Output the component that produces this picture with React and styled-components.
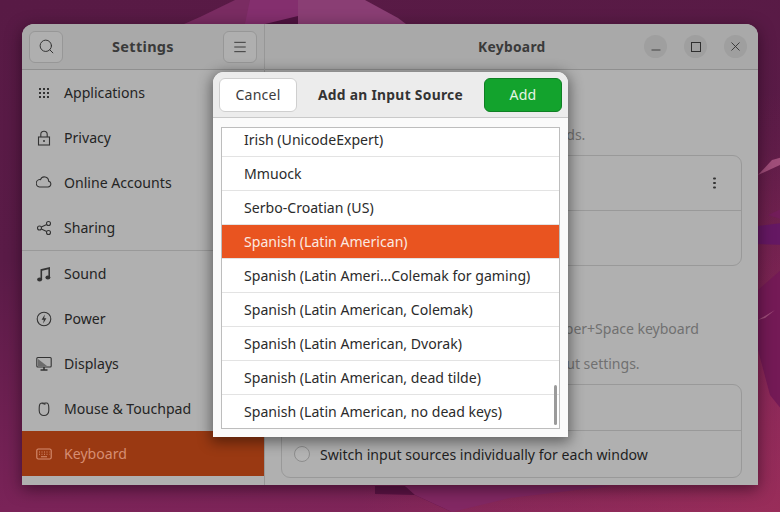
import React from 'react';
import styled, { createGlobalStyle } from 'styled-components';
import { Search, Menu, Minus, X } from 'lucide-react';

const GlobalStyle = createGlobalStyle`
  html, body {
    margin: 0;
    padding: 0;
    height: 100%;
  }
  body {
    font-family: "Noto Sans", "Open Sans", sans-serif;
  }
`;

const Desktop = styled.div`
  position: relative;
  width: 780px;
  height: 512px;
  overflow: hidden;
  background:
    radial-gradient(circle at 100% 100%, rgba(170, 50, 90, 0.55), rgba(170, 50, 90, 0) 45%),
    linear-gradient(172deg, #581a45 0%, #5a1b47 42%, #7a2358 82%, #842759 100%);
`;

const Wallpaper = styled.svg`
  position: absolute;
  inset: 0;
`;

const Win = styled.div`
  position: absolute;
  left: 22px;
  top: 24px;
  width: 736px;
  height: 461px;
  display: flex;
  overflow: hidden;
  background: #b0b0b0;
  border-radius: 12px 12px 0 0;
  box-shadow: 0 4px 16px rgba(20, 0, 15, 0.55);
`;

const Sidebar = styled.aside`
  width: 242px;
  flex-shrink: 0;
  border-right: 1px solid #979797;
`;

const Main = styled.main`
  flex: 1;
  min-width: 0;
`;

const Header = styled.header`
  height: 45px;
  display: flex;
  align-items: center;
  justify-content: space-between;
  background: #a9a9a9;
  border-bottom: 1px solid #8f8f8f;
  padding: ${p => p.$main ? '0 11px 0 10px' : '0 7px'};
`;

const Title = styled.h1`
  margin: 0;
  padding-bottom: 1px;
  font-size: 14.5px;
  font-weight: 700;
  letter-spacing: 0.3px;
  color: #3a3a3a;
`;

const MainTitle = styled(Title)`
  margin-left: 203px;
  font-size: 13.8px;
`;

const HeadButton = styled.div`
  width: 34px;
  height: 32px;
  box-sizing: border-box;
  display: flex;
  align-items: center;
  justify-content: center;
  color: #333;
  background: #afafaf;
  border: 1px solid #979797;
  border-radius: 6px;
`;

const WinControls = styled.div`
  display: flex;
  gap: 17px;
`;

const WinButton = styled.div`
  width: 23px;
  height: 23px;
  border-radius: 50%;
  display: flex;
  align-items: center;
  justify-content: center;
  color: #2f2f2f;
  background: #9f9f9f;
`;

const MaxBox = styled.span`
  width: 8px;
  height: 8px;
  border: 1.2px solid #2f2f2f;
`;

const NavGroup = styled.nav`
  border-bottom: ${p => p.$divided ? '1px solid #999' : 'none'};
`;

const NavRow = styled.div`
  height: 45px;
  box-sizing: border-box;
  display: flex;
  align-items: center;
  gap: 12px;
  padding: 0 0 0 14px;
  font-size: 14.1px;
  color: ${p => p.$active ? '#d68e72' : '#242424'};
  background: ${p => p.$active ? '#9a3912' : 'transparent'};
`;

const NavLabel = styled.span`
  padding-bottom: 1px;
`;

const NavIcon = styled.svg`
  width: 16px;
  height: 16px;
  flex-shrink: 0;
  fill: none;
  stroke: ${p => p.$active ? '#d68e72' : '#333'};
  stroke-width: 1.1;
`;

const Content = styled.div`
  padding: 0 16px;
`;

const SectionTitle = styled.h2`
  margin: ${p => p.$first ? '31px' : '0'} 0 0;
  height: 24px;
  font-size: 14.1px;
  font-weight: 700;
  color: #333;
`;

const Note = styled.p`
  margin: 0;
  height: 35px;
  line-height: 33px;
  font-size: 14.1px;
  letter-spacing: -0.05px;
  white-space: nowrap;
  color: #717171;
`;

const FirstNote = styled(Note)`
  height: 20px;
  line-height: 20px;
  margin-bottom: 10px;
`;

const Card = styled.div`
  box-sizing: border-box;
  border: 1px solid #999;
  border-radius: 9px;
`;

const KeyCard = styled(Card)`
  height: 111px;
  margin-bottom: 22px;
`;

const SwitchCard = styled(Card)`
  margin-top: 2px;
`;

const KeyRow = styled.div`
  height: 55px;
  box-sizing: border-box;
  display: flex;
  align-items: center;
  justify-content: flex-end;
  padding-right: 25px;
  border-bottom: ${p => p.$last ? 'none' : '1px solid #999'};
`;

const Kebab = styled.span`
  width: 2.6px;
  height: 2.6px;
  border-radius: 50%;
  background: #333;
  box-shadow: 0 -4.5px 0 #333, 0 4.5px 0 #333;
`;

const RadioRow = styled.div`
  height: 46px;
  box-sizing: border-box;
  display: flex;
  align-items: center;
  gap: 10px;
  padding-left: 12px;
  font-size: 14.1px;
  color: #1f1f1f;
  border-bottom: ${p => p.$last ? 'none' : '1px solid #999'};
`;

const Radio = styled.span`
  width: 16px;
  height: 16px;
  box-sizing: border-box;
  border: 1px solid #8d8d8d;
  border-radius: 50%;
  background: #b4b4b4;
`;

const Dialog = styled.div`
  position: absolute;
  left: 191px;
  top: 48px;
  width: 355px;
  height: 365px;
  background: #fafafa;
  border-radius: 11px 11px 0 0;
  box-shadow: 0 3px 14px 2px rgba(0, 0, 0, 0.45);
  overflow: hidden;
`;

const DialogHeader = styled.div`
  height: 46px;
  box-sizing: border-box;
  display: flex;
  align-items: center;
  justify-content: space-between;
  padding: 0 6px;
  background: #ececec;
  border-bottom: 1px solid #c9c9c9;
`;

const DialogButton = styled.div`
  width: 78px;
  height: 34px;
  box-sizing: border-box;
  display: flex;
  align-items: center;
  justify-content: center;
  padding-bottom: 1px;
  font-size: 14.1px;
  letter-spacing: 0.2px;
  border-radius: 6px;
  color: ${p => p.$primary ? '#e6f5e6' : '#3d3d3d'};
  background: ${p => p.$primary ? '#13a32d' : '#fff'};
  border: 1px solid ${p => p.$primary ? '#0f7f24' : '#cfcfcf'};
`;

const DialogTitle = styled(Title)`
  font-size: 13.8px;
  color: #333;
`;

const SourceList = styled.div`
  position: relative;
  height: 302px;
  box-sizing: border-box;
  margin: 9px 8px 0;
  overflow: hidden;
  background: #fff;
  border: 1px solid #bdbdbd;
`;

const SourceRow = styled.div`
  height: 34px;
  box-sizing: border-box;
  display: flex;
  align-items: center;
  padding: 0 0 1px 22px;
  font-size: 14.1px;
  white-space: nowrap;
  color: ${p => p.$selected ? '#fbe9e2' : '#2b2b2b'};
  background: ${p => p.$selected ? '#e95420' : '#fff'};
  border-bottom: 1px solid #e3e3e3;
  &:first-child {
    margin-top: -5px;
  }
  &:last-of-type {
    border-bottom: none;
  }
`;

const ScrollThumb = styled.div`
  position: absolute;
  right: 2px;
  top: 257px;
  width: 3px;
  height: 40px;
  border-radius: 2px;
  background: #9b9b9b;
`;

const topNav = [
  {
    label: 'Applications',
    icon: (
      <g fill="#333" stroke="none">
        {[3, 7, 11].map(y => [3, 7, 11].map(x => <rect key={`${x}-${y}`} x={x} y={y} width="2" height="2" />))}
      </g>
    ),
  },
  {
    label: 'Privacy',
    icon: (
      <>
        <rect x="2.5" y="7" width="11" height="8" />
        <path d="M4.8 7V4.5a3.2 3.2 0 0 1 6.4 0V7" />
        <circle cx="8" cy="11" r="1" fill="#333" stroke="none" />
      </>
    ),
  },
  {
    label: 'Online Accounts',
    icon: <path d="M4 12.5h8.5a3 3 0 0 0 .6-5.9A4.2 4.2 0 0 0 5 5.1 3.7 3.7 0 0 0 4 12.5z" transform="translate(-0.5 -0.5)" />,
  },
  {
    label: 'Sharing',
    icon: (
      <>
        <circle cx="3.5" cy="8" r="2" />
        <circle cx="12.5" cy="3.5" r="2" />
        <circle cx="12.5" cy="12.5" r="2" />
        <path d="M5.3 7.1l5.4-2.7M5.3 8.9l5.4 2.7" />
      </>
    ),
  },
];

const bottomNav = [
  {
    label: 'Sound',
    icon: (
      <g fill="#333" stroke="none">
        <path d="M4.5 3.2L14 1v10.5h-1.6V3.2L6.1 4.7v9h-1.6z" />
        <ellipse cx="3.6" cy="13.4" rx="2.5" ry="2" />
        <ellipse cx="11.9" cy="11.4" rx="2.5" ry="2" />
      </g>
    ),
  },
  {
    label: 'Power',
    icon: (
      <>
        <circle cx="8" cy="8" r="6.8" />
        <path d="M8.8 3.6L5.6 8.8h2.2l-.6 3.6 3.2-5.2H8.2z" fill="#333" stroke="none" />
      </>
    ),
  },
  {
    label: 'Displays',
    icon: (
      <>
        <rect x="0.8" y="1.5" width="14.4" height="9.5" rx="1" />
        <path d="M2 3l9 7H2z" fill="#333" stroke="none" opacity="0.55" />
        <path d="M8 11v2.5M4.5 14h7" strokeWidth="1.6" />
      </>
    ),
  },
  {
    label: 'Mouse & Touchpad',
    icon: <path d="M5.5 2h1.7v1.2M8.8 3.2V2h1.7c1.5 0 2.3 1.6 2.3 5v2.5c0 3-1.9 5-4.8 5s-4.8-2-4.8-5V7c0-3.4.8-5 2.6-5z" />,
  },
];

const sources = [
  'Irish (UnicodeExpert)',
  'Mmuock',
  'Serbo-Croatian (US)',
  'Spanish (Latin American)',
  'Spanish (Latin Ameri…Colemak for gaming)',
  'Spanish (Latin American, Colemak)',
  'Spanish (Latin American, Dvorak)',
  'Spanish (Latin American, dead tilde)',
  'Spanish (Latin American, no dead keys)',
];

const Item = ({ item }) => (
  <NavRow>
    <NavIcon viewBox="0 0 16 16">{item.icon}</NavIcon>
    <NavLabel>{item.label}</NavLabel>
  </NavRow>
);

const App = () => (
  <>
    <GlobalStyle />
    <Desktop>
      <Wallpaper width="780" height="512" viewBox="0 0 780 512">
        <polygon points="184,24 200,17 235,0 300,0 298,24" fill="#7a2c62" />
        <polygon points="245,24 250,0 300,0 298,24" fill="#842f6e" />
        <polygon points="298,0 365,0 398,18 406,24 298,24" fill="#8a3e74" />
        <polygon points="265,24 298,24 298,16" fill="#4f1340" />
        <polygon points="758,175 772,160 790,155 780,165" fill="#a04e7a" />
        <polygon points="758,226 790,222 790,245 758,244" fill="#651863" />
        <polygon points="768,215 790,205 790,222" fill="#721d59" />
        <polygon points="758,290 790,262 790,420 770,395 758,350" fill="#741a56" />
        <polygon points="758,320 775,310 765,318" fill="#a04e7a" />
        <polygon points="375,486 405,486 452,512 415,495 375,494" fill="#5a1444" />
        <polygon points="405,486 610,486 510,498 452,512 415,495" fill="#822863" />
      </Wallpaper>
      <Win>
        <Sidebar>
          <Header>
            <HeadButton><Search size={17} strokeWidth={1.4} /></HeadButton>
            <Title>Settings</Title>
            <HeadButton><Menu size={16} strokeWidth={1.4} /></HeadButton>
          </Header>
          <NavGroup $divided>
            {topNav.map(item => <Item key={item.label} item={item} />)}
          </NavGroup>
          <NavGroup>
            {bottomNav.map(item => <Item key={item.label} item={item} />)}
            <NavRow $active>
              <NavIcon $active viewBox="0 0 16 16">
                <rect x="0.8" y="3" width="14.4" height="10" rx="1.5" />
                <path d="M3 6h1M5.5 6h1M8 6h1M10.5 6h1M13 6h.5M3 8.2h1M5.5 8.2h1M8 8.2h1M10.5 8.2h1M13 8.2h.5M5 10.7h6" />
              </NavIcon>
              <NavLabel>Keyboard</NavLabel>
            </NavRow>
          </NavGroup>
        </Sidebar>
        <Main>
          <Header $main>
            <MainTitle>Keyboard</MainTitle>
            <WinControls>
              <WinButton><Minus size={14} strokeWidth={1.4} style={{ marginTop: 6 }} /></WinButton>
              <WinButton><MaxBox /></WinButton>
              <WinButton><X size={15} strokeWidth={1.4} /></WinButton>
            </WinControls>
          </Header>
          <Content>
            <SectionTitle $first>Input Sources</SectionTitle>
            <FirstNote>Includes keyboard layouts and input methods.</FirstNote>
            <KeyCard>
              <KeyRow><Kebab /></KeyRow>
              <KeyRow $last />
            </KeyCard>
            <SectionTitle>Input Source Switching</SectionTitle>
            <Note>Input sources can be switched using the Super+Space keyboard</Note>
            <Note>This can be changed in the keyboard shortcut settings.</Note>
            <SwitchCard>
              <RadioRow><Radio />Use the same source for all windows</RadioRow>
              <RadioRow $last><Radio />Switch input sources individually for each window</RadioRow>
            </SwitchCard>
          </Content>
        </Main>
        <Dialog>
          <DialogHeader>
            <DialogButton>Cancel</DialogButton>
            <DialogTitle>Add an Input Source</DialogTitle>
            <DialogButton $primary>Add</DialogButton>
          </DialogHeader>
          <SourceList>
            {sources.map(name => (
              <SourceRow key={name} $selected={name === 'Spanish (Latin American)'}>{name}</SourceRow>
            ))}
            <ScrollThumb />
          </SourceList>
        </Dialog>
      </Win>
    </Desktop>
  </>
);

export default App;
